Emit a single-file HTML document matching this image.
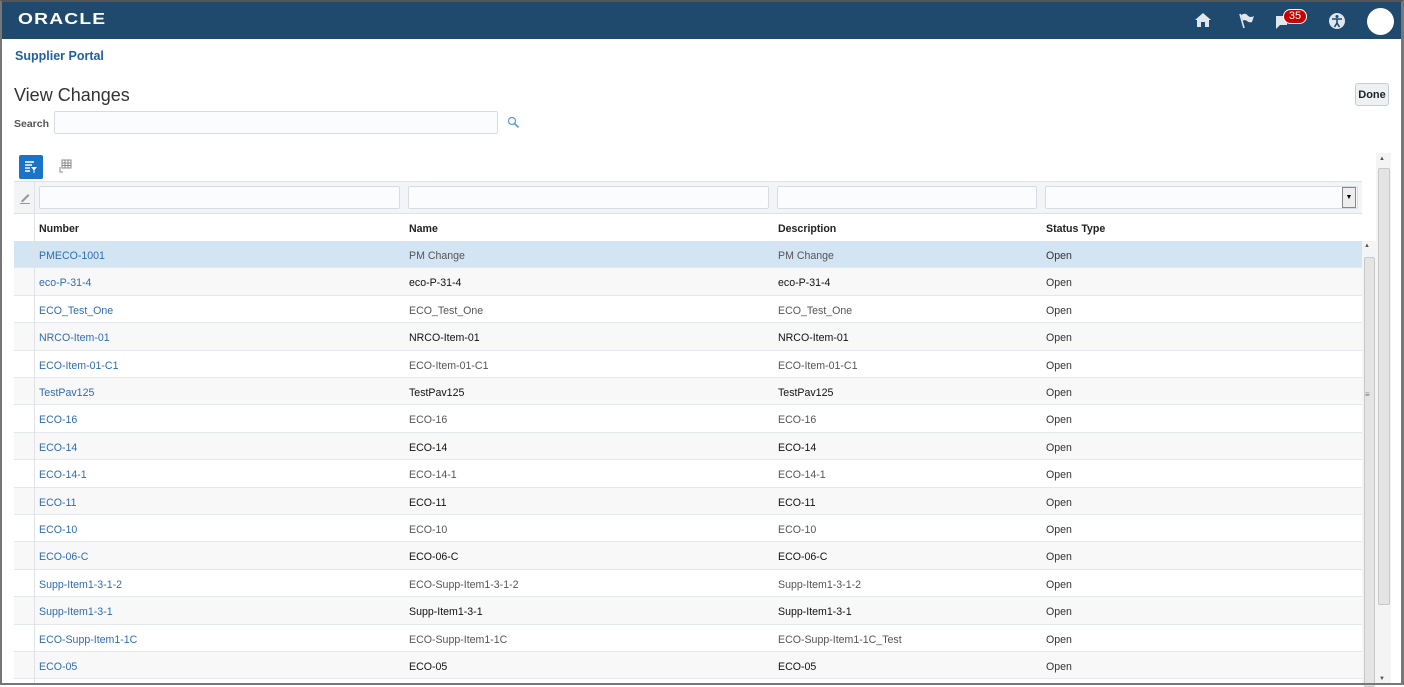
<!DOCTYPE html>
<html><head><style>
*{box-sizing:border-box;margin:0;padding:0}
body{width:1404px;height:685px;overflow:hidden;background:#fff;font-family:"Liberation Sans",Arial,sans-serif;position:relative}
.frame{position:absolute;left:0;top:0;width:1404px;height:685px;border:2px solid #777;border-top:2px solid #555;border-right:3px solid #777}
.hdr{position:absolute;left:2px;top:2px;width:1399px;height:37px;background:#1f4a6e}
.logo{position:absolute;left:16px;top:9px;color:#fff;font-size:16px;letter-spacing:1px;transform:scaleX(1.2);transform-origin:left;font-weight:bold}
.a{position:absolute}
.link{color:#1f5f9e}
.row{position:absolute;left:14px;width:1348px;height:27.4px;border-bottom:1px solid #e4e8ec;font-size:10.6px}
.row span{position:absolute;top:9px}
.c1{left:25px;color:#2e6cb0}.c2{left:395px}.c3{left:764px}.c4{left:1032px;color:#333}
.g span.c2,.g span.c3{color:#555}.b span.c2,.b span.c3{color:#111}
.b{background:#f8f8f8}
.inp{position:absolute;height:23px;top:186px;border:1px solid #d6dce2;background:#fbfcfd;border-radius:2px}
</style></head><body>
<div class="hdr">
<div class="logo">ORACLE</div>
<svg class="a" style="left:1192px;top:10px" width="18" height="16" viewBox="0 0 18 16"><path d="M9 1 L1 8 L3 8 L3 15 L7 15 L7 10 L11 10 L11 15 L15 15 L15 8 L17 8 Z" fill="#dfe6ee"/></svg>
<svg class="a" style="left:1235px;top:10px" width="18" height="18" viewBox="0 0 18 18"><path d="M3 2 L7 16" stroke="#dfe6ee" stroke-width="1.6"/><path d="M4 3 Q9 0 11 4 Q14 6 17 4 L15 10 Q12 11 10 9 Q7 7 6 9 Z" fill="#dfe6ee"/></svg>
<svg class="a" style="left:1272px;top:12px" width="16" height="16" viewBox="0 0 16 16"><path d="M2 2 H13 V11 H6 L2 15 Z" fill="#dfe6ee"/></svg>
<div class="a" style="left:1281px;top:7px;width:24px;height:15px;background:#c00;border:1px solid #fff;border-radius:8px;color:#fff;font-size:11px;text-align:center;line-height:13px">35</div>
<svg class="a" style="left:1326px;top:10px" width="18" height="18" viewBox="0 0 18 18"><circle cx="9" cy="9" r="8" fill="#dfe6ee"/><circle cx="9" cy="4.5" r="1.5" fill="#1f4a6e"/><path d="M4 7 H14 M9 7 V11 M9 11 L6.5 15 M9 11 L11.5 15" stroke="#1f4a6e" stroke-width="1.6"/></svg>
<div class="a" style="left:1365px;top:6px;width:27px;height:27px;border-radius:50%;background:#fff"></div>
</div>
<div class="a link" style="left:15px;top:49px;font-size:12.5px;font-weight:bold">Supplier Portal</div>
<div class="a" style="left:14px;top:85px;font-size:18px;color:#333">View Changes</div>
<div class="a" style="left:14px;top:118px;font-size:10.5px;font-weight:bold;color:#555">Search</div>
<div class="a" style="left:54px;top:111px;width:444px;height:23px;border:1px solid #d6dce2;background:#fbfcfd;border-radius:2px"></div>
<svg class="a" style="left:507px;top:116px" width="13" height="13" viewBox="0 0 13 13"><circle cx="5" cy="5" r="3.5" fill="none" stroke="#5a9bd5" stroke-width="1.2"/><path d="M7.5 7.5 L11.5 11.5" stroke="#5a9bd5" stroke-width="1.6"/></svg>
<div class="a" style="left:1355px;top:83px;width:34px;height:23px;border:1px solid #c4ccd4;background:#eef1f4;border-radius:3px;font-size:11px;font-weight:bold;text-align:center;line-height:23px;color:#222">Done</div>
<div class="a" style="left:19px;top:155px;width:24px;height:24px;background:#1a73c7;border-radius:2px"></div>
<svg class="a" style="left:24px;top:160px" width="14" height="14" viewBox="0 0 14 14"><path d="M1 2 H10 M1 5 H8 M1 8 H6 M1 11 H6" stroke="#fff" stroke-width="1.5"/><path d="M7 7 H13 L10.5 10 V13 H9.5 V10 Z" fill="#fff"/></svg>
<svg class="a" style="left:58px;top:159px" width="14" height="16" viewBox="0 0 14 16"><path d="M4 1 H13 V9 H4 Z M4 4 H13 M4 6.5 H13 M7 1 V9 M10 1 V9 M2 8 V13 H5" stroke="#888" fill="none"/></svg>
<div class="a" style="left:14px;top:181px;width:1348px;height:33px;background:#f2f4f6;border-top:1px solid #dde2e7;border-bottom:1px solid #dde2e7"></div>
<svg class="a" style="left:19px;top:192px" width="12" height="12" viewBox="0 0 12 12"><path d="M2 9 L9 2 L10.5 3.5 L3.5 10.5 Z" fill="#999"/><path d="M1 11.5 H11" stroke="#999"/></svg>
<div class="inp" style="left:39px;width:361px"></div>
<div class="inp" style="left:408px;width:361px"></div>
<div class="inp" style="left:777px;width:260px"></div>
<div class="inp" style="left:1045px;width:313px"></div>
<div class="a" style="left:1342px;top:187px;width:14px;height:21px;border:1px solid #888;background:#eee;font-size:7px;text-align:center;line-height:19px">▼</div>
<div class="a" style="left:14px;top:214px;width:1348px;height:27px;font-size:10.6px;font-weight:bold;color:#222">
<span class="a" style="left:25px;top:9px">Number</span><span class="a" style="left:395px;top:9px">Name</span><span class="a" style="left:764px;top:9px">Description</span><span class="a" style="left:1032px;top:9px">Status Type</span></div>
<div class="row g" style="top:241px;background:#d3e4f3"><span class="c1">PMECO-1001</span><span class="c2">PM Change</span><span class="c3">PM Change</span><span class="c4">Open</span></div>
<div class="row b" style="top:268.4px"><span class="c1">eco-P-31-4</span><span class="c2">eco-P-31-4</span><span class="c3">eco-P-31-4</span><span class="c4">Open</span></div>
<div class="row g" style="top:295.8px"><span class="c1">ECO_Test_One</span><span class="c2">ECO_Test_One</span><span class="c3">ECO_Test_One</span><span class="c4">Open</span></div>
<div class="row b" style="top:323.2px"><span class="c1">NRCO-Item-01</span><span class="c2">NRCO-Item-01</span><span class="c3">NRCO-Item-01</span><span class="c4">Open</span></div>
<div class="row g" style="top:350.6px"><span class="c1">ECO-Item-01-C1</span><span class="c2">ECO-Item-01-C1</span><span class="c3">ECO-Item-01-C1</span><span class="c4">Open</span></div>
<div class="row b" style="top:378px"><span class="c1">TestPav125</span><span class="c2">TestPav125</span><span class="c3">TestPav125</span><span class="c4">Open</span></div>
<div class="row g" style="top:405.4px"><span class="c1">ECO-16</span><span class="c2">ECO-16</span><span class="c3">ECO-16</span><span class="c4">Open</span></div>
<div class="row b" style="top:432.8px"><span class="c1">ECO-14</span><span class="c2">ECO-14</span><span class="c3">ECO-14</span><span class="c4">Open</span></div>
<div class="row g" style="top:460.2px"><span class="c1">ECO-14-1</span><span class="c2">ECO-14-1</span><span class="c3">ECO-14-1</span><span class="c4">Open</span></div>
<div class="row b" style="top:487.6px"><span class="c1">ECO-11</span><span class="c2">ECO-11</span><span class="c3">ECO-11</span><span class="c4">Open</span></div>
<div class="row g" style="top:515px"><span class="c1">ECO-10</span><span class="c2">ECO-10</span><span class="c3">ECO-10</span><span class="c4">Open</span></div>
<div class="row b" style="top:542.4px"><span class="c1">ECO-06-C</span><span class="c2">ECO-06-C</span><span class="c3">ECO-06-C</span><span class="c4">Open</span></div>
<div class="row g" style="top:569.8px"><span class="c1">Supp-Item1-3-1-2</span><span class="c2">ECO-Supp-Item1-3-1-2</span><span class="c3">Supp-Item1-3-1-2</span><span class="c4">Open</span></div>
<div class="row b" style="top:597.2px"><span class="c1">Supp-Item1-3-1</span><span class="c2">Supp-Item1-3-1</span><span class="c3">Supp-Item1-3-1</span><span class="c4">Open</span></div>
<div class="row g" style="top:624.6px"><span class="c1">ECO-Supp-Item1-1C</span><span class="c2">ECO-Supp-Item1-1C</span><span class="c3">ECO-Supp-Item1-1C_Test</span><span class="c4">Open</span></div>
<div class="row b" style="top:652px"><span class="c1">ECO-05</span><span class="c2">ECO-05</span><span class="c3">ECO-05</span><span class="c4">Open</span></div>
<div class="a" style="left:34px;top:181px;width:1px;height:502px;background:#dfe3e7"></div>
<!-- inner scrollbar -->
<div class="a" style="left:1362px;top:241px;width:14px;height:442px;background:#f4f4f4"></div>
<div class="a" style="left:1364px;top:257px;width:11px;height:430px;background:#e4e4e4;border:1px solid #c8c8c8;border-radius:2px"></div>
<div class="a" style="left:1364px;top:243px;font-size:6px;color:#555">▲</div>
<div class="a" style="left:1365px;top:390px;font-size:8px;color:#777">≡</div>
<!-- outer scrollbar -->
<div class="a" style="left:1376px;top:153px;width:15px;height:530px;background:#f4f4f4"></div>
<div class="a" style="left:1378px;top:168px;width:12px;height:437px;background:#e4e4e4;border:1px solid #c8c8c8;border-radius:2px"></div>
<div class="a" style="left:1379px;top:156px;font-size:6px;color:#555">▲</div>
<div class="a" style="left:1379px;top:676px;font-size:6px;color:#555">▼</div>
<div class="frame"></div>
</body></html>
